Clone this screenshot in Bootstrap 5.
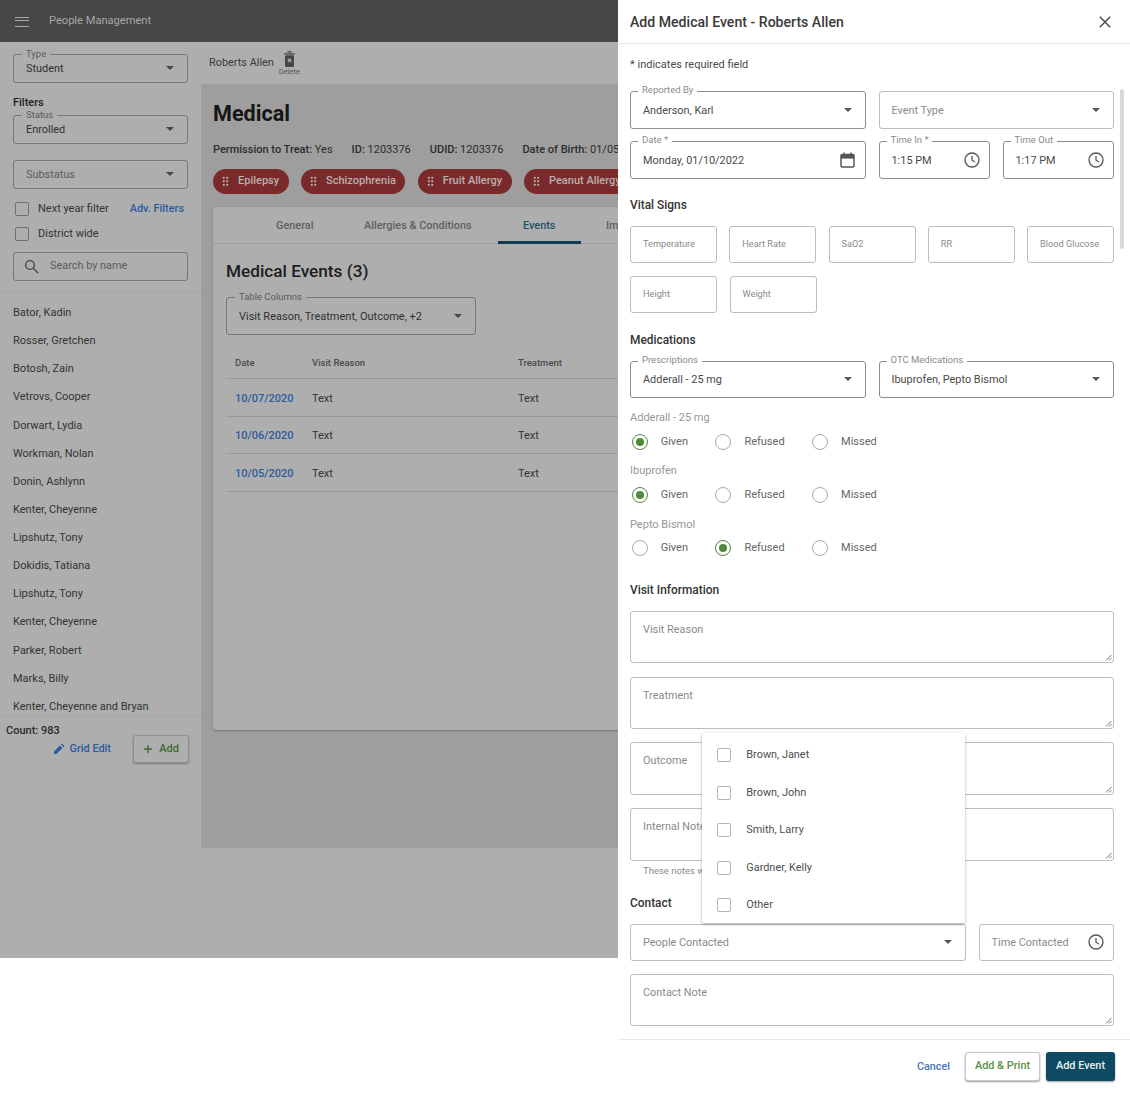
<!doctype html>
<html lang="en">
<head>
<meta charset="utf-8">
<title>Add Medical Event</title>
<link href="https://cdn.jsdelivr.net/npm/bootstrap@5.3.0/dist/css/bootstrap.min.css" rel="stylesheet">
<style>
html,body{height:1096px;overflow:hidden;background:#fff}
body{font-family:Roboto,"Liberation Sans",sans-serif;font-size:11px;color:#333}
.shell{width:1130px;height:1096px}
.dimmed{width:618px;height:958px;background:#aeaeae;overflow:hidden;flex:none}
.appbar{height:42px;background:#474747;color:#a8a8a8;font-size:11.1px;padding:1px 0 0 15px;gap:20px}
.burger{width:14px;height:10px;border-top:1.5px solid #aaa;border-bottom:1.5px solid #aaa;position:relative}
.burger::after{content:"";position:absolute;left:0;right:0;top:2.75px;border-top:1.5px solid #aaa}
.rail{width:201px;flex:none;height:916px;display:flex;flex-direction:column}
.railtop{padding:12px 13px 0 13px;height:250px;border-bottom:1px solid #a6a6a6;flex:none}
.fld{position:relative;border:1px solid #777;border-radius:3px;height:28.5px;display:flex;align-items:center;padding:2px 12px 0;font-size:10.9px;color:#303030;white-space:nowrap}
.fld .lg{position:absolute;left:8px;top:-7px;background:#aeaeae;padding:0 4px;font-size:9.5px;line-height:11px;color:#5a5a5a}
.fld .car{margin:-2px 1.5px 0 auto;flex:none}
.muted2{color:#5c5c5c}
.filt{font-weight:500;font-size:11px;color:#222;margin:13px 0 6.5px;line-height:13px}
.sub{margin-top:16.5px}
.ck{width:14px;height:14px;border:1px solid #6f6f6f;border-radius:2px;flex:none;margin-right:9px}
.rowck{height:25px;font-size:11px;color:#333;padding-left:2px}
.rowck.first{margin-top:8px}
.lnkb{color:#2a5a9e;font-weight:500;font-size:10.9px}
.srch{margin-top:5.5px;padding:0 0 0 10px}
.srch svg{margin-right:11px;flex:none}
.names{padding:7px 13px 0;font-size:11px;color:#333;height:425px;overflow:hidden;border-bottom:1px solid #a6a6a6;flex:none}
.names div{height:28.13px;line-height:28px}
.cnt{padding:7px 6px 0;font-size:11px;font-weight:500;color:#2c2c2c;line-height:13px}
.actions{padding-right:12px;margin-top:-2px;gap:22px}
.addb{width:56px;height:28px;border:1px solid #8e8e8e;border-radius:3px;box-shadow:0 1px 2px #777;color:#3f6a32;font-weight:500;font-size:11px;gap:6px}
.grided{gap:5px;padding-top:1px}
.main{flex:1;min-width:0;height:916px;display:flex;flex-direction:column}
.crumb{height:42px;background:#aeaeae;padding-left:8px;flex:none;font-size:10.9px;color:#3c3c3c}
.del{font-size:7.5px;color:#555;margin-left:5px;line-height:8px;margin-top:1px}
.canvas{background:#9e9e9e;height:764px;padding:0 0 0 12px;flex:none;overflow:hidden;width:417px}
.canvas h1{font-size:21.6px;font-weight:700;color:#161616;margin:18px 0 0;line-height:24px}
.meta{gap:19px;font-size:11px;margin-top:17px;color:#2c2c2c;white-space:nowrap;line-height:13px}
.meta b{font-weight:500}
.chips{gap:12.4px;margin-top:13px;white-space:nowrap}
.chipx{height:25px;border-radius:13px;background:#7a2a2a;color:#b9b0b0;font-weight:500;font-size:11px;padding:0 9.5px 0 9px;gap:9px;flex:none}
.dots{width:7px;height:10.5px;background-image:radial-gradient(circle,#c4bbbb 1.1px,transparent 1.4px);background-size:3.5px 3.5px;flex:none}
.panelcard{background:#aeaeae;width:417px;height:523px;margin-top:13px;border-radius:4px 0 0 4px;box-shadow:0 1px 2px #777;flex:none}
.tabsx{height:37px;border-bottom:1px solid #a0a0a0;font-size:10.9px;font-weight:500;color:#5f5f5f;white-space:nowrap;position:relative}
.tabsx span{position:absolute;top:12px;line-height:14px}
.tabsx .t1{left:63px}
.tabsx .t2{left:151px}
.tabsx .t3{left:310px;color:#1f5266}
.tabsx .t4{left:393px}
.tabon{position:absolute;left:285px;width:83px;bottom:-1px;height:3px;background:#0f3d50}
.panelcard h2{font-size:17.2px;font-weight:500;color:#1d1d1d;margin:17px 0 0 13px;line-height:20px}
.tcols{width:250px;height:38px;margin:16px 0 0 13px;font-size:11px}
.tablex{margin:13px 0 0 13px;font-size:11px;color:#333}
.tr1{height:37.5px;border-bottom:1px solid #989898;display:flex;align-items:center;padding-top:3px}
.tr1 span:nth-child(1){width:86px;padding-left:9px;flex:none}
.tr1 span:nth-child(2){width:206px;flex:none}
.tr1.thd{font-size:9.5px;font-weight:500;color:#4a4a4a;height:31px;padding-top:0}
.datel{color:#2a5a9e;font-weight:500}
.drawer{width:512px;height:1096px;background:#fff;position:relative;flex:none;color:#444}
.dhead{height:44px;border-bottom:1px solid #e8e8e8;padding:1px 19px 0 12px}
.dhead h3{font-size:14.1px;font-weight:500;color:#3a3a3a;margin:0}
.formz{padding:0 0 0 12px;width:496px;position:relative}
.req{font-size:11px;color:#4a4a4a;line-height:13px;padding-top:14px;height:47px}
.inp{position:relative;border:1px solid #bdbdbd;border-radius:3px;height:37.5px;display:flex;align-items:center;padding:2px 12px 0;font-size:10.9px;color:#8a8a8a;background:#fff;white-space:nowrap}
.inp.on{border-color:#8c8c8c;color:#4a4a4a}
.inp .lg{position:absolute;left:7px;top:-7px;background:#fff;padding:0 4px;font-size:9.5px;line-height:10px;color:#8a8a8a}
.inp .car,.inp .ico{margin-left:auto;margin-top:-2px;flex:none}
.inp .car{margin-right:1.5px}
.inp .ico{margin-right:-3px}
.inp .ico.cal{margin-right:-1.5px}
.inp.sm2{font-size:9.2px;padding-top:0}
.gapr{gap:12.5px}
.wmd{width:236px;flex:none}
.wsm{width:111.5px;flex:none}
.wpeople{width:336px;flex:none}
.vit{width:87px;flex:none}
.vitrow{gap:12.25px;margin-top:13.5px}
.sect{font-size:11.9px;font-weight:500;color:#333;line-height:14px;margin-top:19.5px}
.sect.info{margin-top:27px}
.sect.cont{margin-top:20.5px}
.m-row{margin-top:12.5px}
.m-14{margin-top:14px}
.m-meda{margin-top:13px}
.m-medb{margin-top:14.7px}
.medl{font-size:11px;color:#979797;line-height:14px}
.rad{width:16px;height:16px;border:1.5px solid #aaa;border-radius:50%;flex:none;display:flex;align-items:center;justify-content:center;margin-left:1.7px}
.rad.sel{border-color:#4f8a3c}
.rad.sel::after{content:"";width:8px;height:8px;border-radius:50%;background:#4f8a3c}
.radl{font-size:11px;color:#666;margin-left:13px;line-height:16px;flex:none}
.w1{width:53px}
.w2{width:66px}
.radrow{height:16px;margin-top:8.6px;display:flex;align-items:center}
.ta{position:relative;border:1px solid #bdbdbd;border-radius:3px;height:52.5px;padding:11px 12px;font-size:10.9px;line-height:14px;color:#8a8a8a;margin-top:13.3px}
.ta.tfirst{margin-top:13.7px}
.ta.tlast{margin-top:12.5px}
.grip{position:absolute;right:1px;bottom:1px}
.hint{font-size:9.5px;color:#8a8a8a;padding-left:13px;line-height:11px;margin-top:4px}
.contrw{margin-top:13.5px}
.menu{position:absolute;left:84.3px;top:733px;width:262.5px;height:190px;background:#fff;box-shadow:0 1px 3px rgba(0,0,0,.35);border-radius:2px;padding:3.5px 0 0 15px;z-index:3}
.menu .it{height:37.5px;font-size:10.9px;color:#4e4e4e;gap:15px}
.ck2{width:14px;height:14px;border:1.5px solid #b4b4b4;border-radius:2px;flex:none}
.foot{position:absolute;left:0;right:0;top:1039px;height:57px;border-top:1px solid #e8e8e8;padding:12px 15px 0 0;gap:6px}
.bt{height:29px;border-radius:3px;font-size:10.9px;font-weight:500;padding:0;box-shadow:0 1px 2px rgba(0,0,0,.4)}
.bt1{width:75px;border:1px solid #c8c8c8;color:#5b8f43;background:#fff}
.bt2{width:69px;background:#0f4a63;color:#e6eef1;border:0}
.cancel{color:#4a76bd;font-size:10.8px;font-weight:500;margin:7px 9px 0 0}
.scr{position:absolute;left:502px;top:89px;width:4px;height:160px;background:#d9d9d9;border-radius:2px}
</style>
</head>
<body class="m-0">
<div class="shell d-flex align-items-start">
  <div class="dimmed">
    <div class="appbar d-flex align-items-center"><span class="burger"></span><span>People Management</span></div>
    <div class="d-flex">
      <div class="rail">
        <div class="railtop">
          <div class="fld"><span class="lg">Type</span>Student<svg class="car" width="8" height="4"><path d="M0 0h8L4 4z" fill="#444"/></svg></div>
          <div class="filt">Filters</div>
          <div class="fld"><span class="lg">Status</span>Enrolled<svg class="car" width="8" height="4"><path d="M0 0h8L4 4z" fill="#444"/></svg></div>
          <div class="fld muted2 sub">Substatus<svg class="car" width="8" height="4"><path d="M0 0h8L4 4z" fill="#444"/></svg></div>
          <div class="rowck first d-flex align-items-center"><span class="ck"></span>Next year filter<span class="lnkb ms-auto me-1">Adv. Filters</span></div>
          <div class="rowck d-flex align-items-center"><span class="ck"></span>District wide</div>
          <div class="fld muted2 srch"><svg width="15" height="15" viewBox="0 0 15 15" fill="none" stroke="#444" stroke-width="1.4"><circle cx="6" cy="6" r="4.4"/><path d="M9.3 9.3 14 14"/></svg><span>Search by name</span></div>
        </div>
        <div class="names">
          <div>Bator, Kadin</div><div>Rosser, Gretchen</div><div>Botosh, Zain</div><div>Vetrovs, Cooper</div><div>Dorwart, Lydia</div><div>Workman, Nolan</div><div>Donin, Ashlynn</div><div>Kenter, Cheyenne</div><div>Lipshutz, Tony</div><div>Dokidis, Tatiana</div><div>Lipshutz, Tony</div><div>Kenter, Cheyenne</div><div>Parker, Robert</div><div>Marks, Billy</div><div>Kenter, Cheyenne and Bryan</div>
        </div>
        <div class="cnt">Count: 983</div>
        <div class="actions d-flex align-items-center justify-content-end">
          <span class="lnkb grided d-flex align-items-center"><svg width="12" height="12" viewBox="0 0 12 12"><path d="M1 11V8.6l6-6L9.4 5l-6 6zM8 1.6l1-1L11.4 3l-1 1z" fill="#2a5a9e"/></svg>Grid Edit</span>
          <span class="addb d-flex align-items-center justify-content-center"><svg width="10" height="10"><path d="M4.3 1h1.4v3.3H9v1.4H5.7V9H4.3V5.7H1V4.3h3.3z" fill="#3f6a32"/></svg>Add</span>
        </div>
      </div>
      <div class="main">
        <div class="crumb d-flex align-items-center"><span>Roberts Allen</span>
          <span class="del d-flex flex-column align-items-center"><svg width="13" height="17" viewBox="0 0 12 16"><path d="M1 2.6h10M4 .8h4" stroke="#444" stroke-width="1.2" fill="none"/><rect x="1.8" y="4" width="8.4" height="11" rx="1" fill="#444"/><path d="M4.4 7.2l3.2 3.2M7.6 7.2l-3.2 3.2" stroke="#aeaeae" stroke-width="1.2"/></svg>Delete</span>
        </div>
        <div class="canvas">
          <h1>Medical</h1>
          <div class="meta d-flex"><span><b>Permission to Treat:</b> Yes</span><span><b>ID:</b> 1203376</span><span><b>UDID:</b> 1203376</span><span><b>Date of Birth:</b> 01/05/2015</span></div>
          <div class="chips d-flex">
            <span class="chipx d-flex align-items-center"><i class="dots"></i>Epilepsy</span>
            <span class="chipx d-flex align-items-center"><i class="dots"></i>Schizophrenia</span>
            <span class="chipx d-flex align-items-center"><i class="dots"></i>Fruit Allergy</span>
            <span class="chipx d-flex align-items-center"><i class="dots"></i>Peanut Allergy</span>
          </div>
          <div class="panelcard">
            <div class="tabsx"><span class="t1">General</span><span class="t2">Allergies &amp; Conditions</span><span class="t3">Events</span><span class="t4">Immunizations</span><i class="tabon"></i></div>
            <h2>Medical Events (3)</h2>
            <div class="fld tcols"><span class="lg">Table Columns</span>Visit Reason, Treatment, Outcome, +2<svg class="car" width="8" height="4"><path d="M0 0h8L4 4z" fill="#444"/></svg></div>
            <div class="tablex">
              <div class="tr1 thd"><span>Date</span><span>Visit Reason</span><span>Treatment</span></div>
              <div class="tr1"><span class="datel">10/07/2020</span><span>Text</span><span>Text</span></div>
              <div class="tr1"><span class="datel">10/06/2020</span><span>Text</span><span>Text</span></div>
              <div class="tr1"><span class="datel">10/05/2020</span><span>Text</span><span>Text</span></div>
            </div>
          </div>
        </div>
      </div>
    </div>
  </div>
  <aside class="drawer">
    <div class="dhead d-flex align-items-center justify-content-between">
      <h3>Add Medical Event - Roberts Allen</h3>
      <svg width="12" height="12" viewBox="0 0 12 12" stroke="#444" stroke-width="1.4"><path d="M.8.8l10.4 10.4M11.2.8.8 11.2"/></svg>
    </div>
    <div class="formz">
      <div class="req">* indicates required field</div>
      <div class="d-flex gapr">
        <div class="inp on wmd"><span class="lg">Reported By</span>Anderson, Karl<svg class="car" width="8" height="4"><path d="M0 0h8L4 4z" fill="#555"/></svg></div>
        <div class="inp flex-fill"><span>Event Type</span><svg class="car" width="8" height="4"><path d="M0 0h8L4 4z" fill="#555"/></svg></div>
      </div>
      <div class="d-flex gapr m-row">
        <div class="inp on wmd"><span class="lg">Date *</span>Monday, 01/10/2022<svg class="ico cal" width="15" height="16" viewBox="0 0 15 16" fill="none" stroke="#555" stroke-width="1.5"><rect x="1" y="2.6" width="13" height="12.4" rx="1"/><path d="M1 4.8h13" stroke-width="3.6"/><path d="M4 .5v3M11 .5v3"/></svg></div>
        <div class="inp on wsm"><span class="lg">Time In *</span>1:15 PM<svg class="ico" width="16" height="16" viewBox="0 0 16 16" fill="none" stroke="#555" stroke-width="1.3"><circle cx="8" cy="8" r="7"/><path d="M8 4v4.2l3 1.8"/></svg></div>
        <div class="inp on wsm"><span class="lg">Time Out</span>1:17 PM<svg class="ico" width="16" height="16" viewBox="0 0 16 16" fill="none" stroke="#555" stroke-width="1.3"><circle cx="8" cy="8" r="7"/><path d="M8 4v4.2l3 1.8"/></svg></div>
      </div>
      <div class="sect">Vital Signs</div>
      <div class="d-flex vitrow">
        <div class="inp sm2 vit">Temperature</div><div class="inp sm2 vit">Heart Rate</div><div class="inp sm2 vit">SaO2</div><div class="inp sm2 vit">RR</div><div class="inp sm2 vit">Blood Glucose</div>
      </div>
      <div class="d-flex gapr m-row">
        <div class="inp sm2 vit">Height</div><div class="inp sm2 vit">Weight</div>
      </div>
      <div class="sect">Medications</div>
      <div class="d-flex gapr m-14">
        <div class="inp on wmd"><span class="lg">Prescriptions</span>Adderall - 25 mg<svg class="car" width="8" height="4"><path d="M0 0h8L4 4z" fill="#555"/></svg></div>
        <div class="inp on flex-fill"><span class="lg">OTC Medications</span>Ibuprofen, Pepto Bismol<svg class="car" width="8" height="4"><path d="M0 0h8L4 4z" fill="#555"/></svg></div>
      </div>
      <div class="medl m-meda">Adderall - 25 mg</div>
      <div class="radrow"><span class="rad sel"></span><span class="radl w1">Given</span><span class="rad"></span><span class="radl w2">Refused</span><span class="rad"></span><span class="radl">Missed</span></div>
      <div class="medl m-medb">Ibuprofen</div>
      <div class="radrow"><span class="rad sel"></span><span class="radl w1">Given</span><span class="rad"></span><span class="radl w2">Refused</span><span class="rad"></span><span class="radl">Missed</span></div>
      <div class="medl m-medb">Pepto Bismol</div>
      <div class="radrow"><span class="rad"></span><span class="radl w1">Given</span><span class="rad sel"></span><span class="radl w2">Refused</span><span class="rad"></span><span class="radl">Missed</span></div>
      <div class="sect info">Visit Information</div>
      <div class="ta tfirst">Visit Reason<svg class="grip" width="7" height="7"><path d="M1 6.5 6.5 1M4 6.5 6.5 4" stroke="#777" fill="none"/></svg></div>
      <div class="ta">Treatment<svg class="grip" width="7" height="7"><path d="M1 6.5 6.5 1M4 6.5 6.5 4" stroke="#777" fill="none"/></svg></div>
      <div class="ta">Outcome<svg class="grip" width="7" height="7"><path d="M1 6.5 6.5 1M4 6.5 6.5 4" stroke="#777" fill="none"/></svg></div>
      <div class="ta">Internal Notes<svg class="grip" width="7" height="7"><path d="M1 6.5 6.5 1M4 6.5 6.5 4" stroke="#777" fill="none"/></svg></div>
      <div class="hint">These notes will not be shared</div>
      <div class="sect cont">Contact</div>
      <div class="d-flex gapr contrw">
        <div class="inp wpeople">People Contacted<svg class="car" width="8" height="4"><path d="M0 0h8L4 4z" fill="#555"/></svg></div>
        <div class="inp flex-fill">Time Contacted<svg class="ico" width="16" height="16" viewBox="0 0 16 16" fill="none" stroke="#555" stroke-width="1.3"><circle cx="8" cy="8" r="7"/><path d="M8 4v4.2l3 1.8"/></svg></div>
      </div>
      <div class="ta tlast">Contact Note<svg class="grip" width="7" height="7"><path d="M1 6.5 6.5 1M4 6.5 6.5 4" stroke="#777" fill="none"/></svg></div>
    </div>
    <div class="menu">
      <div class="it d-flex align-items-center"><span class="ck2"></span>Brown, Janet</div>
      <div class="it d-flex align-items-center"><span class="ck2"></span>Brown, John</div>
      <div class="it d-flex align-items-center"><span class="ck2"></span>Smith, Larry</div>
      <div class="it d-flex align-items-center"><span class="ck2"></span>Gardner, Kelly</div>
      <div class="it d-flex align-items-center"><span class="ck2"></span>Other</div>
    </div>
    <div class="scr"></div>
    <div class="foot d-flex justify-content-end align-items-start">
      <span class="cancel">Cancel</span>
      <button class="btn bt bt1">Add &amp; Print</button>
      <button class="btn bt bt2">Add Event</button>
    </div>
  </aside>
</div>
<script src="https://cdn.jsdelivr.net/npm/bootstrap@5.3.0/dist/js/bootstrap.bundle.min.js"></script>
</body>
</html>
